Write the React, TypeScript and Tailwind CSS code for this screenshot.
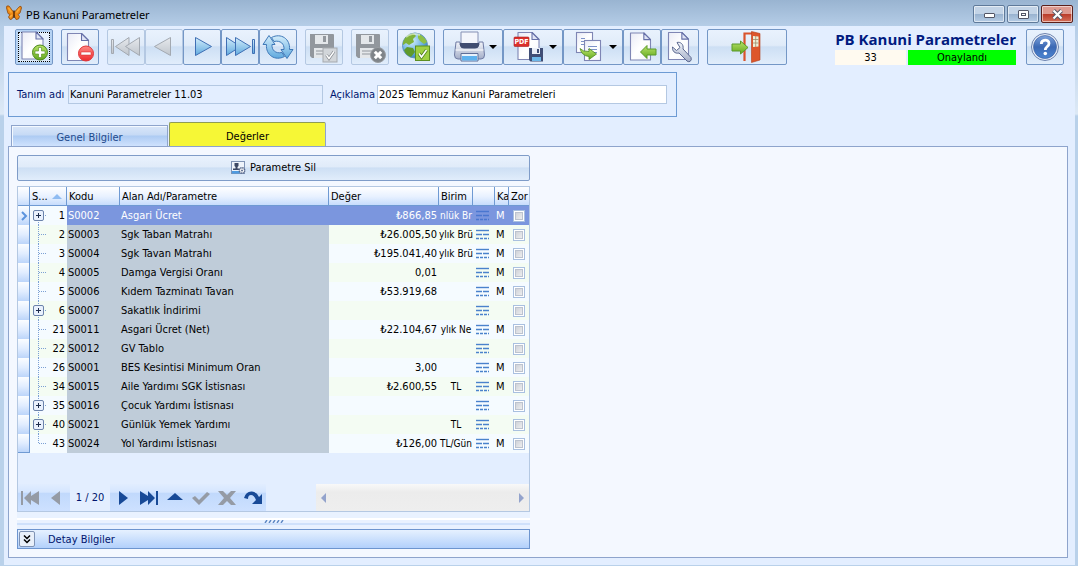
import type { ReactNode } from "react";
import clsx from "clsx";

type Row = {
  no: number;
  code: string;
  name: string;
  value?: string;
  unit?: string;
  kind?: string;
  children?: boolean;
};

const rows: Row[] = [
  { no: 1, code: "S0002", name: "Asgari Ücret", value: "₺866,85", unit: "nlük Br", kind: "M", children: true },
  { no: 2, code: "S0003", name: "Sgk Taban Matrahı", value: "₺26.005,50", unit: "ylık Brü", kind: "M" },
  { no: 3, code: "S0004", name: "Sgk Tavan Matrahı", value: "₺195.041,40", unit: "ylık Brü", kind: "M" },
  { no: 4, code: "S0005", name: "Damga Vergisi Oranı", value: "0,01", kind: "M" },
  { no: 5, code: "S0006", name: "Kıdem Tazminatı Tavan", value: "₺53.919,68", kind: "M" },
  { no: 6, code: "S0007", name: "Sakatlık İndirimi", children: true },
  { no: 21, code: "S0011", name: "Asgari Ücret (Net)", value: "₺22.104,67", unit: "ylık Ne", kind: "M" },
  { no: 22, code: "S0012", name: "GV Tablo" },
  { no: 26, code: "S0001", name: "BES Kesintisi Minimum Oran", value: "3,00", kind: "M" },
  { no: 34, code: "S0015", name: "Aile Yardımı SGK İstisnası", value: "₺2.600,55", unit: "TL", kind: "M" },
  { no: 35, code: "S0016", name: "Çocuk Yardımı İstisnası", children: true },
  { no: 40, code: "S0021", name: "Günlük Yemek Yardımı", unit: "TL", children: true },
  { no: 43, code: "S0024", name: "Yol Yardımı İstisnası", value: "₺126,00", unit: "TL/Gün", kind: "M" },
];

/* ---------- toolbar drawings ---------- */

function Defs() {
  return (
    <svg width="0" height="0" className="absolute" aria-hidden>
      <defs>
        <linearGradient id="paper" x1="0" y1="0" x2="1" y2="1">
          <stop offset="0" stopColor="#e9ebf6" />
          <stop offset="0.5" stopColor="#fff" />
          <stop offset="1" stopColor="#f4f5fb" />
        </linearGradient>
        <linearGradient id="blue" x1="0" y1="0" x2="0" y2="1">
          <stop offset="0" stopColor="#d3edfb" />
          <stop offset="1" stopColor="#5fa9de" />
        </linearGradient>
        <linearGradient id="grey" x1="0" y1="0" x2="0" y2="1">
          <stop offset="0" stopColor="#e6e9ed" />
          <stop offset="1" stopColor="#bfc5cc" />
        </linearGradient>
        <linearGradient id="green" x1="0" y1="0" x2="0" y2="1">
          <stop offset="0" stopColor="#b9e36b" />
          <stop offset="1" stopColor="#63a81d" />
        </linearGradient>
        <linearGradient id="red" x1="0" y1="0" x2="0" y2="1">
          <stop offset="0" stopColor="#ff8a86" />
          <stop offset="1" stopColor="#ee2a2c" />
        </linearGradient>
        <linearGradient id="steel" x1="0" y1="0" x2="0" y2="1">
          <stop offset="0" stopColor="#f3f5fa" />
          <stop offset="1" stopColor="#a4aec8" />
        </linearGradient>
        <radialGradient id="sea" cx="0.35" cy="0.3" r="0.8">
          <stop offset="0" stopColor="#d9f1fd" />
          <stop offset="0.6" stopColor="#66aee0" />
          <stop offset="1" stopColor="#2f6fae" />
        </radialGradient>
        <linearGradient id="help" x1="0" y1="0" x2="0" y2="1">
          <stop offset="0" stopColor="#7fa3dc" />
          <stop offset="0.5" stopColor="#3b68b4" />
          <stop offset="1" stopColor="#4c86d2" />
        </linearGradient>
      </defs>
    </svg>
  );
}

function Icon({ w = 32, children }: { w?: number; children: ReactNode }) {
  return (
    <svg width={w} height="32" viewBox={`0 0 ${w} 32`} className="shrink-0" aria-hidden>
      {children}
    </svg>
  );
}

function Paper({ x = 4, y = 1.5, w = 21, h = 27 }: { x?: number; y?: number; w?: number; h?: number }) {
  const f = w / 3;
  return (
    <g transform={`translate(${x} ${y})`} strokeLinejoin="round">
      <path d={`M0 0H${w - f}L${w} ${f}V${h}H0Z`} fill="url(#paper)" stroke="#7f86b4" strokeWidth="1.1" />
      <path d={`M${w - f} 0V${f}H${w}Z`} fill="#dfe4f5" stroke="#6670a8" strokeWidth="1.1" />
    </g>
  );
}

function Floppy({ dark, light = "#e4e7ea" }: { dark: string; light?: string }) {
  return (
    <g>
      <path d="M2 3H25.500L26 4V27H4L2 25Z" fill={dark} />
      <path d="M7 4H20V13H7Z" fill={light} />
      <path d="M15 5H18V11H15Z" fill={dark} />
      <path d="M6 17H22V27H6Z" fill={light} />
      <path d="M8 20H20M8 23H20" stroke={dark} />
    </g>
  );
}

const NewIcon = () => (
  <Icon>
    <Paper y={1} />
    <circle cx="22" cy="21.500" r="7.500" fill="url(#green)" stroke="#4d8a1c" />
    <path d="M20.500 16.500h3v3.500h3.500v3h-3.500v3.500h-3V23H17v-3h3.500Z" fill="#fff" stroke="#4d8a1c" strokeWidth="0.6" />
  </Icon>
);

const DeleteIcon = () => (
  <Icon>
    <Paper x={3.5} y={2.5} />
    <circle cx="22" cy="22.500" r="7.500" fill="url(#red)" stroke="#e0383c" />
    <rect x="17" y="21" width="10" height="3" rx="0.5" fill="#fff" stroke="#c22" strokeWidth="0.5" />
  </Icon>
);

const FirstIcon = () => (
  <Icon>
    <g fill="url(#grey)" stroke="#a3a9b1" strokeLinejoin="round">
      <rect x="1.500" y="8.500" width="2" height="14" />
      <path d="M5.500 15.500L19 6.500V24.500Z" />
      <path d="M15.500 15.500L29.500 6.500V24.500Z" />
    </g>
  </Icon>
);

const PrevIcon = () => (
  <Icon>
    <path d="M6.500 15.500L22.500 6.500V24.500Z" fill="url(#grey)" stroke="#a3a9b1" strokeLinejoin="round" />
  </Icon>
);

const NextIcon = () => (
  <Icon>
    <path d="M25.500 15.500L9.500 6.500V24.500Z" fill="url(#blue)" stroke="#3f6fb4" strokeLinejoin="round" />
  </Icon>
);

const LastIcon = () => (
  <Icon>
    <g fill="url(#blue)" stroke="#3f6fb4" strokeLinejoin="round">
      <path d="M16.500 15.500L2.500 6.500V24.500Z" />
      <path d="M26.500 15.500L11.500 6.500V24.500Z" />
      <rect x="28.500" y="8.500" width="2" height="14" />
    </g>
  </Icon>
);

const RefreshIcon = () => (
  <Icon>
    <g fill="url(#blue)" stroke="#3f79b8" strokeLinejoin="round">
      <path d="M7 4.500L13 13.500H10C9.500 19 13.500 23 20 21.500L22.500 25.500C13 30.500 3.500 24 4.500 13.500H1Z" />
      <path d="M25 27.500L19 18.500H22C22.500 13 18.500 9 12 10.500L9.500 6.500C19 1.500 28.500 8 27.500 18.500H31Z" />
    </g>
  </Icon>
);

const SaveIcon = () => (
  <Icon>
    <Floppy dark="#92979d" />
    <rect x="15" y="17" width="14" height="14" fill="#d2d6da" stroke="#a5a9ae" />
    <path d="M18.500 24l2.500 3.500L26 20.500" fill="none" stroke="#858a90" strokeWidth="3" />
    <path d="M18.500 24l2.500 3.500L26 20.500" fill="none" stroke="#fff" strokeWidth="1.4" />
  </Icon>
);

const CancelIcon = () => (
  <Icon>
    <Floppy dark="#92979d" />
    <circle cx="24" cy="24" r="7.500" fill="#7f8489" stroke="#9a9ea3" />
    <path d="M20.800 20.800l6.400 6.400M27.200 20.800l-6.400 6.400" stroke="#fff" strokeWidth="3" />
  </Icon>
);

const GlobeIcon = () => (
  <Icon>
    <circle cx="15" cy="14.500" r="12.500" fill="url(#sea)" stroke="#5f93bd" />
    <path d="M4 9C6 5 10 2.500 14 2.500L16 5L13 8L14 11L9 14L6 12L3 14C2.700 12 3 10.500 4 9Z" fill="#7fb23a" />
    <path d="M18 3C22 4 25.500 7 27 11L24 13L20 10L18 7Z" fill="#8dbf45" />
    <path d="M7 16L13 17L15 21L11 26C8 25 5 22.500 4 19Z" fill="#5f9a2b" />
    <path d="M6 6C9 3 15 2 20 4" stroke="#eef8e0" strokeWidth="2" fill="none" opacity="0.6" />
    <rect x="15.500" y="15" width="14" height="14.500" fill="#9fd043" stroke="#5d8f22" />
    <path d="M19 22.500l2.500 3.500L26.500 19" fill="none" stroke="#4f7f1f" strokeWidth="3.200" />
    <path d="M19 22.500l2.500 3.500L26.500 19" fill="none" stroke="#fff" strokeWidth="1.600" />
  </Icon>
);

const PrintIcon = () => (
  <Icon w={36}>
    <path d="M12 1H29V16H12Z" fill="#f3f5fb" stroke="#8690b4" />
    <path d="M7 11H11V14H30V11H34L35.500 24Q35.500 28 32 28H9Q5.500 28 5.500 24Z" fill="url(#steel)" stroke="#6f7ba3" />
    <path d="M11 12H30V15Q29 17.500 26 17.500H15Q12 17.500 11 15Z" fill="#414d70" />
    <path d="M6.500 19H34.500" stroke="#fff" />
    <path d="M12 22.500H29V30H12Z" fill="#e9f2fb" stroke="#5f6f99" />
    <path d="M13 25H28V29.500H13Z" fill="#5fb2ee" />
  </Icon>
);

const PdfIcon = () => (
  <Icon w={36}>
    <Paper x={9} y={1.5} />
    <rect x="5" y="6" width="15" height="9.500" rx="1" fill="#dc2f2a" stroke="#a81e1e" strokeWidth="0.6" />
    <text x="12.500" y="13.300" textAnchor="middle" fontSize="7" fontWeight="700" fill="#fff" fontFamily="DejaVu Sans Condensed, sans-serif">
      PDF
    </text>
    <path d="M20 17H34V30.500H21.500L20 29Z" fill="#3f4d75" />
    <path d="M23 17H31V23H23Z" fill="#e9edf6" />
    <path d="M28 18H30V22H28Z" fill="#3f4d75" />
    <path d="M23 26H32V30H23Z" fill="#6db7e8" />
  </Icon>
);

const CopyIcon = () => (
  <Icon w={36}>
    <g fill="url(#paper)" stroke="#7f86b4" strokeWidth="1.100">
      <rect x="7.500" y="1.500" width="16" height="20" />
      <path d="M12 7.500H16M12 10.500H18M12 13.500H18" stroke="#7e92c8" />
      <rect x="15.500" y="9.500" width="16" height="20" />
      <path d="M19 15.500H28M19 18.500H28M19 21.500H28" stroke="#7e92c8" />
    </g>
    <path d="M11 17.500Q14 21 20 20.500V17.500L27.500 23L20 28.500V25.500Q13 25 11 17.500Z" fill="url(#green)" stroke="#4d8a1c" strokeWidth="0.8" />
  </Icon>
);

const ImportIcon = () => (
  <Icon>
    <Paper x={4.500} y={2} w={20} />
    <path d="M14.500 21L21 14.500V18H30V24H21V27.500Z" fill="url(#green)" stroke="#5b9a2a" strokeLinejoin="round" />
  </Icon>
);

const WrenchIcon = () => (
  <Icon>
    <Paper x={4.500} y={1.5} w={20} />
    <path
      d="M13 11.500C16 10.500 20 13 19 18L27 26.500Q28 29 26 30.500Q24 31 23 30L15 22C11 23 8 20 8.500 16L12.500 19.500L16 16.500Z"
      fill="url(#steel)"
      stroke="#59668f"
      strokeLinejoin="round"
    />
  </Icon>
);

const ExitIcon = () => (
  <Icon>
    <path d="M13.500 30V2.500H22" fill="none" stroke="#d9532c" strokeWidth="2.200" />
    <path d="M20.500 0.500L29 2.500V29L20.500 31.500Z" fill="#dd562b" stroke="#b33d18" strokeWidth="0.6" />
    <path d="M22 5L27.500 5.500V15.500L22 16Z" fill="#eef0d8" />
    <path d="M24.700 5V16M22 8.500H27.500M22 12H27.500" stroke="#a08a6a" strokeWidth="0.8" />
    <path d="M1 13H9.500V10L17 16.500L9.500 23V20H1Z" fill="url(#green)" stroke="#5b9a2a" strokeLinejoin="round" />
  </Icon>
);

const HelpIcon = () => (
  <Icon>
    <circle cx="16" cy="16" r="13.500" fill="#e7edf8" stroke="#6c82ae" />
    <circle cx="16" cy="16" r="11.500" fill="url(#help)" stroke="#3a5c9c" strokeWidth="0.6" />
    <path d="M12.300 13C12.300 8 20 8 20 12.500C20 15.500 16.300 15.500 16.300 19" fill="none" stroke="#fff" strokeWidth="2.800" />
    <circle cx="16.300" cy="22.500" r="1.800" fill="#fff" />
  </Icon>
);

function Butterfly() {
  return (
    <svg width="16" height="16" viewBox="0 0 16 16" aria-hidden>
      <path d="M7.500 7L3 1Q0 0 0.500 3L2 8.500L4 9.500L2.500 12L4 14.500L6 14L8 10L10 14.500L12.500 14L13.500 11.500L12 9.500L14 8L15.500 3Q15.500 0.500 13.500 1.500L8.500 7Z" fill="#ef8a17" stroke="#8f4a0c" strokeWidth="0.8" />
      <path d="M2.500 3L5.500 7.500M13.500 3.500L10.500 7.500M4 12L6 10" stroke="#f9ab38" strokeWidth="1.500" />
      <path d="M8 5.500V13" stroke="#4a2505" strokeWidth="1.400" />
    </svg>
  );
}

/* ---------- controls ---------- */

const face = "bg-[linear-gradient(#e9f2fd,#e0ebf9_45%,#cddff4_50%,#e1edfb)]";

type ToolProps = { label: string; off?: boolean; width?: string; focused?: boolean; menu?: boolean; children: ReactNode };

function Tool({ label, off, width = "w-[38px]", focused, menu, children }: ToolProps) {
  return (
    <button
      type="button"
      aria-label={label}
      disabled={off}
      className={clsx(
        "flex h-9 shrink-0 items-center justify-center rounded-[2px] border",
        width,
        face,
        off ? "border-[#b4c8e2]" : "border-[#7497c6]",
        focused && "shadow-[inset_0_0_0_2px_#b5d2f3]",
      )}
    >
      {focused ? (
        <span className="flex h-[30px] w-8 items-center justify-center border border-dotted border-black">{children}</span>
      ) : (
        children
      )}
      {menu && <span className="ml-1 border-x-4 border-t-4 border-x-transparent border-t-black" />}
    </button>
  );
}

function Toolbar() {
  return (
    <div className="flex items-start pt-[3px] pr-[11px] pl-[11px]">
      <div className="flex gap-2">
        <Tool label="Yeni" focused><NewIcon /></Tool>
        <Tool label="Sil"><DeleteIcon /></Tool>
        <div className="flex">
          <Tool label="İlk" off><FirstIcon /></Tool>
          <Tool label="Önceki" off><PrevIcon /></Tool>
          <Tool label="Sonraki"><NextIcon /></Tool>
          <Tool label="Son"><LastIcon /></Tool>
          <Tool label="Yenile"><RefreshIcon /></Tool>
        </div>
        <Tool label="Kaydet" off><SaveIcon /></Tool>
        <Tool label="Vazgeç" off><CancelIcon /></Tool>
        <Tool label="Onayla"><GlobeIcon /></Tool>
        <div className="flex">
          <Tool label="Yazdır" width="w-[60px]" menu><PrintIcon /></Tool>
          <Tool label="PDF kaydet" width="w-[60px]" menu><PdfIcon /></Tool>
          <Tool label="Kopyala" width="w-[60px]" menu><CopyIcon /></Tool>
          <Tool label="İçe aktar"><ImportIcon /></Tool>
          <Tool label="Ayarlar"><WrenchIcon /></Tool>
        </div>
        <Tool label="Çıkış" width="w-20"><ExitIcon /></Tool>
      </div>
      <div className="ml-auto flex gap-[10px]">
        <div className="w-[181px]">
          <h1 className="h-[21px] text-right font-['Open_Sans',sans-serif] text-[15px] leading-[21px] font-bold whitespace-nowrap text-[#001a80]">
            PB Kanuni Parametreler
          </h1>
          <div className="flex gap-[2px] text-center text-[11px] leading-[15px]">
            <span className="w-[71px] bg-[#fffaf0]">33</span>
            <span className="flex-1 bg-[#00ff00]">Onaylandı</span>
          </div>
        </div>
        <Tool label="Yardım"><HelpIcon /></Tool>
      </div>
    </div>
  );
}

function TitleBar() {
  const btn = "flex h-[18px] w-8 items-center justify-center rounded-[2px] border shadow-[inset_0_0_0_1px_rgba(255,255,255,0.55)]";
  return (
    <header className="flex h-[26px] items-center pr-[5px] pl-[6px]">
      <Butterfly />
      <span className="ml-1 pt-1 font-['Noto_Sans',sans-serif] text-[11px] text-black">PB Kanuni Parametreler</span>
      <div className="ml-auto flex gap-[2px] pt-[2px]">
        <button type="button" aria-label="Küçült" className={clsx(btn, "border-[#5f7a9a] bg-[linear-gradient(#c3d4e7_50%,#98b2cf_50%,#b6cde6)]")}>
          <span className="mt-[3px] h-[5px] w-[11px] rounded-[1px] border border-[#535666] bg-white" />
        </button>
        <button type="button" aria-label="Büyüt" className={clsx(btn, "border-[#5f7a9a] bg-[linear-gradient(#c3d4e7_50%,#98b2cf_50%,#b6cde6)]")}>
          <span className="flex h-[9px] w-[11px] items-center justify-center rounded-[1px] border border-[#535666] bg-white">
            <span className="h-[3px] w-[5px] border border-[#535666]" />
          </span>
        </button>
        <button type="button" aria-label="Kapat" className={clsx(btn, "border-[#5b1f1a] bg-[linear-gradient(#dd9a90_50%,#b93a28_50%,#d6705a)]")}>
          <svg width="13" height="11" viewBox="0 0 13 11" aria-hidden>
            <path d="M2.500 1.500L10.500 9.500M10.500 1.500L2.500 9.500" stroke="#535666" strokeWidth="4" />
            <path d="M2.500 1.500L10.500 9.500M10.500 1.500L2.500 9.500" stroke="#fff" strokeWidth="2.200" />
          </svg>
        </button>
      </div>
    </header>
  );
}

/* dotted branch in front of each row number */
function Branch({ row, first, last }: { row: Row; first: boolean; last: boolean }) {
  return (
    <span className="relative flex h-[19px] w-4 items-center">
      <svg width="16" height="19" viewBox="0 0 16 19" className="absolute left-0" aria-hidden>
        <path d={`M8.500 ${first ? 10 : 0}V${last ? 10 : 19}`} stroke="#7ba0d4" strokeDasharray="1 1" />
        <path d="M9 9.500H16" stroke="#7ba0d4" strokeDasharray="1 1" />
      </svg>
      {row.children && (
        <button type="button" aria-label={`${row.name} aç`} className="relative ml-[3px] flex size-[11px] items-center justify-center rounded-[2px] border border-[#6c83ab] bg-[#e9f1fd]">
          <svg width="7" height="7" viewBox="0 0 7 7" aria-hidden>
            <path d="M3.500 1V6M1 3.500H6" stroke="#1d2c4c" />
          </svg>
        </button>
      )}
    </span>
  );
}

function LinesIcon({ on }: { on: boolean }) {
  return (
    <svg width="13" height="11" viewBox="0 0 13 11" className="ml-[3px] block" aria-hidden>
      <path d="M0 1.500H13" stroke={on ? "#4a76d0" : "#4a82cc"} strokeWidth="1.4" />
      <path d="M0 5.500H6M7 5.500H13" stroke={on ? "#4a76d0" : "#4a82cc"} strokeWidth="1.4" />
      <path d="M0 9.500H13" stroke={on ? "#4a76d0" : "#4a82cc"} strokeWidth="1.4" strokeDasharray="3 1" />
    </svg>
  );
}

function ParameterTable() {
  const th = "h-[19px] overflow-hidden border-r border-b border-[#6f9ad3] p-0 pt-px pl-[2px] text-left font-normal whitespace-nowrap";
  return (
    <table className="w-full table-fixed border-separate border-spacing-0">
      <colgroup>
        <col className="w-3" />
        <col className="w-[37px]" />
        <col className="w-[53px]" />
        <col className="w-[209px]" />
        <col className="w-[110px]" />
        <col className="w-[34px]" />
        <col className="w-[22px]" />
        <col className="w-[14px]" />
        <col />
      </colgroup>
      <thead>
        <tr className="bg-[linear-gradient(#ffffff,#e8f1ff_50%,#c3dafc)]">
          <th className={th} aria-label="Seçim" />
          <th className={th}>
            <span className="flex items-center gap-1">
              S...
              <span className="border-x-[5px] border-b-[5px] border-x-transparent border-b-[#8fbcf2]" />
            </span>
          </th>
          <th className={th}>Kodu</th>
          <th className={th}>Alan Adı/Parametre</th>
          <th className={th}>Değer</th>
          <th className={th}>Birim</th>
          <th className={th} aria-label="Detay" />
          <th className={th}>Ka</th>
          <th className={clsx(th, "border-r-0")}>Zor</th>
        </tr>
      </thead>
      <tbody>
        {rows.map((row, i) => {
          const on = i === 0;
          const td = "h-[19px] overflow-hidden p-0 whitespace-nowrap";
          const zebra = i % 2 ? "bg-[#f4fcf3]" : "bg-[#f5fbff]";
          const fill = on ? "bg-[#7b96de] text-white" : zebra;
          const locked = on ? "bg-[#7b96de] text-white" : "bg-[#bfccd9]";
          return (
            <tr key={row.code}>
              <td className={clsx(td, "border-r border-[#6f9ad3] bg-[linear-gradient(#fbfdff,#e1edff_50%,#bcd5fa)]", i === rows.length - 1 && "border-b")}>
                {on && (
                  <svg width="10" height="10" viewBox="0 0 10 10" className="ml-px block" aria-hidden>
                    <path d="M3 1L7 5L3 9" fill="none" stroke="#5b93dd" strokeWidth="2" />
                  </svg>
                )}
              </td>
              <td className={clsx(td, zebra, "pr-[2px]")}>
                <span className="flex items-center justify-between">
                  <Branch row={row} first={on} last={i === rows.length - 1} />
                  <span className="pt-px">{row.no}</span>
                </span>
              </td>
              <td className={clsx(td, locked, "pt-px pl-px")}>{row.code}</td>
              <td className={clsx(td, locked, "pt-px pl-px")}>{row.name}</td>
              <td className={clsx(td, fill, "pt-px pr-[2px] text-right")}>{row.value}</td>
              <td className={clsx(td, fill, "text-center text-[10px]")}>{row.unit}</td>
              <td className={clsx(td, fill)}><LinesIcon on={on} /></td>
              <td className={clsx(td, fill, "pt-px pl-px")}>{row.kind}</td>
              <td className={clsx(td, fill)}>
                <input
                  type="checkbox"
                  aria-label={`${row.name} zorunlu`}
                  className="mx-auto block size-3 appearance-none border border-[#a9c0e0] bg-[linear-gradient(135deg,#c6cad2,#f6f6f6)] shadow-[inset_0_0_0_1px_#fff,inset_0_0_0_2px_#bcc3cf]"
                />
              </td>
            </tr>
          );
        })}
      </tbody>
    </table>
  );
}

function NavButton({ label, off, d }: { label: string; off?: boolean; d: string }) {
  return (
    <button type="button" aria-label={label} disabled={off} className={clsx("flex h-[27px] w-[26px] items-center justify-center", off ? "text-[#959ba5]" : "text-[#184a97]")}>
      <svg width="20" height="16" viewBox="0 0 20 16" fill="currentColor" aria-hidden>
        <path d={d} />
      </svg>
    </button>
  );
}

function GridFooter() {
  const strip = "flex bg-[linear-gradient(#e1edff,#d5e6ff_30%,#c1d9fc_35%,#cde1ff)]";
  return (
    <div className="mt-auto flex justify-between">
      <div className="flex">
        <div className={strip}>
          <NavButton label="İlk kayıt" off d="M0 1h2v14H0zM3 8l7-7v5l8-5v14l-8-5v5z" />
          <NavButton label="Önceki kayıt" off d="M13 1v14L4 8z" />
        </div>
        <span className="w-10 pt-px text-center leading-[26px] text-[#00156e]">1 / 20</span>
        <div className={strip}>
          <NavButton label="Sonraki kayıt" d="M6 1v14l9-7z" />
          <NavButton label="Son kayıt" d="M16 8l-7-7v5l-8-5v14l8-5v5zM17 1h2v14h-2z" />
          <NavButton label="Düzenle" d="M10 3l8 7H2z" />
          <NavButton label="Kaydet" off d="M1 8l3-2 4 4 8-8 3 2L8 15z" />
          <NavButton label="İptal" off d="M1 1h5l4 4 4-4h5l-6 7 6 7h-5l-4-4-4 4H1l6-7z" />
          <NavButton label="Tazele" d="M1 8Q3 1 9 1.500Q14 2 16 7L19 4v10H9l4-4Q11 5 8 5Q5 5 5 9Z" />
        </div>
      </div>
      <div className="flex w-[213px] items-center justify-between bg-[linear-gradient(#f8f8f8,#ececec_30%,#eeeeee)] px-[5px]">
        <button type="button" aria-label="Sola kaydır" className="border-y-[5px] border-r-[5px] border-y-transparent border-r-[#93a3cc]" />
        <button type="button" aria-label="Sağa kaydır" className="border-y-[5px] border-l-[5px] border-y-transparent border-l-[#93a3cc]" />
      </div>
    </div>
  );
}

export default function App() {
  const field = "h-[19px] border border-[#b4c8e2] px-px text-black outline-none";
  return (
    <div className="flex min-h-screen flex-col bg-[linear-gradient(#99b4d1,#b5cde7_26px,#dde9f6_114px,#b9d1ea_116px)] pb-px font-['DejaVu_Sans_Condensed','DejaVu_Sans',sans-serif] text-[11px] leading-[14px] text-black">
      <Defs />
      <TitleBar />
      <main className="mr-[3px] ml-1 flex flex-1 flex-col bg-[#e3eeff]">
        <Toolbar />

        <form className="mt-[7px] ml-1 flex h-[45px] w-[669px] items-center border border-[#6d9bd4] px-2 text-[#00156e]">
          <label htmlFor="name" className="w-[51px] whitespace-nowrap">Tanım adı</label>
          <input id="name" readOnly defaultValue="Kanuni Parametreler 11.03" className={clsx(field, "w-[255px] bg-[#e3eeff]")} />
          <label htmlFor="desc" className="ml-[7px] w-[47px] whitespace-nowrap">Açıklama</label>
          <input id="desc" defaultValue="2025 Temmuz Kanuni Parametreleri" className={clsx(field, "w-[290px] bg-white")} />
        </form>

        <div role="tablist" className="mt-[5px] ml-[7px] flex h-6 items-end">
          <button type="button" role="tab" aria-selected={false} className="h-[21px] w-[157px] border border-b-0 border-[#8ea4cc] bg-[linear-gradient(#d9e6f9,#c6daf5_45%,#adcbf3_50%,#cfe2fd)] pt-[3px] text-[#1e4a8c] shadow-[inset_1px_1px_0_#f4f9ff]">
            Genel Bilgiler
          </button>
          <button type="button" role="tab" aria-selected className="ml-px h-6 w-[157px] rounded-t-[2px] border border-b-0 border-[#8f9c55] border-r-[#8ea4cc] bg-[#f6f736] pt-1">
            Değerler
          </button>
        </div>

        <section role="tabpanel" className="mr-[7px] mb-[7px] ml-1 flex flex-1 flex-col border border-[#8ea4cc] bg-[#f4f8ff] p-2">
          <div className="flex w-[513px] flex-1 flex-col">
            <button type="button" className={clsx("flex h-[26px] items-center justify-center gap-1 rounded-[2px] border border-[#7f9cc8]", face)}>
              <svg width="15" height="14" viewBox="0 0 15 14" aria-hidden>
                <rect x="0.5" y="0.5" width="13" height="12" fill="#eef3fa" stroke="#7f93b5" />
                <path d="M1 10H9V12.500H1Z" fill="#4f9be0" />
                <path d="M3.500 2H7.500V5L6.500 6V7.500H9V9H2V7.500H4.500V6L3.500 5Z" fill="#3c4864" />
                <circle cx="11" cy="9.500" r="2.700" fill="#fff" stroke="#5b6b8e" strokeWidth="1.500" strokeDasharray="1.500 0.600" />
                <circle cx="11" cy="9.500" r="1" fill="#5b6b8e" />
              </svg>
              Parametre Sil
            </button>

            <div className="mt-[5px] flex flex-1 flex-col border border-[#b4c8e2] bg-[#e3eeff]">
              <ParameterTable />
              <GridFooter />
            </div>

            <div className="flex h-[17px] flex-col items-center bg-[#e9f2ff] pt-[6px]">
              <div className="flex w-full justify-center border-y-2 border-t-white border-b-[#cfe1fb]">
                <svg width="20" height="3" viewBox="0 0 20 3" aria-hidden>
                  <path d="M1 3l2-3M5 3l2-3M9 3l2-3M13 3l2-3M17 3l2-3" stroke="#5e88c4" strokeWidth="1.400" />
                </svg>
              </div>
            </div>

            <div className="flex h-5 items-center border border-[#6d95cf] bg-[linear-gradient(#e6f1ff,#b2d0fb)] pl-px text-[#00156e]">
              <button type="button" aria-label="Detayı aç" className="flex size-4 items-center justify-center rounded-[2px] border border-[#7f93b5] bg-[#e9f0fa]">
                <svg width="8" height="9" viewBox="0 0 8 9" aria-hidden>
                  <path d="M1 0.500L4 3.500L7 0.500M1 4.500L4 7.500L7 4.500" fill="none" stroke="#000" strokeWidth="1.500" />
                </svg>
              </button>
              <span className="ml-[13px] pt-px">Detay Bilgiler</span>
            </div>
          </div>
        </section>
      </main>
    </div>
  );
}
